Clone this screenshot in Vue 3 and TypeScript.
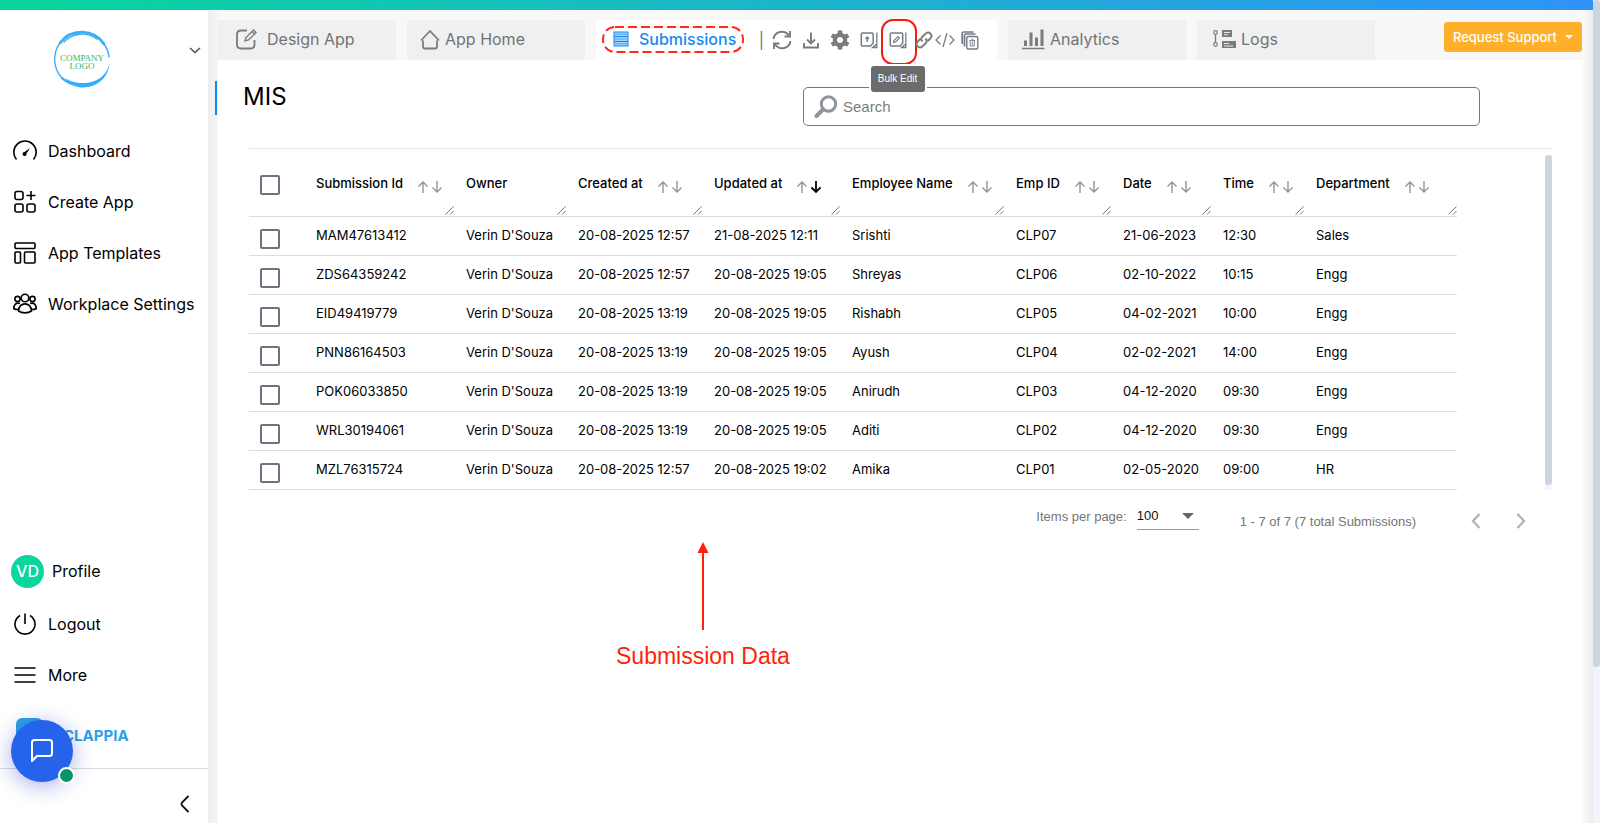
<script setup lang="ts">
import { ref } from 'vue'

interface Column {
  key: string
  label: string
  width: number
  sortable: boolean
}

const columns: Column[] = [
  { key: 'id', label: 'Submission Id', width: 150, sortable: true },
  { key: 'owner', label: 'Owner', width: 112, sortable: false },
  { key: 'created', label: 'Created at', width: 136, sortable: true },
  { key: 'updated', label: 'Updated at', width: 138, sortable: true },
  { key: 'name', label: 'Employee Name', width: 164, sortable: true },
  { key: 'emp', label: 'Emp ID', width: 107, sortable: true },
  { key: 'date', label: 'Date', width: 100, sortable: true },
  { key: 'time', label: 'Time', width: 93, sortable: true },
  { key: 'dept', label: 'Department', width: 153, sortable: true },
]

const owner = "Verin D'Souza"
const rows: Record<string, string>[] = [
  { id: 'MAM47613412', owner, created: '20-08-2025 12:57', updated: '21-08-2025 12:11', name: 'Srishti', emp: 'CLP07', date: '21-06-2023', time: '12:30', dept: 'Sales' },
  { id: 'ZDS64359242', owner, created: '20-08-2025 12:57', updated: '20-08-2025 19:05', name: 'Shreyas', emp: 'CLP06', date: '02-10-2022', time: '10:15', dept: 'Engg' },
  { id: 'EID49419779', owner, created: '20-08-2025 13:19', updated: '20-08-2025 19:05', name: 'Rishabh', emp: 'CLP05', date: '04-02-2021', time: '10:00', dept: 'Engg' },
  { id: 'PNN86164503', owner, created: '20-08-2025 13:19', updated: '20-08-2025 19:05', name: 'Ayush', emp: 'CLP04', date: '02-02-2021', time: '14:00', dept: 'Engg' },
  { id: 'POK06033850', owner, created: '20-08-2025 13:19', updated: '20-08-2025 19:05', name: 'Anirudh', emp: 'CLP03', date: '04-12-2020', time: '09:30', dept: 'Engg' },
  { id: 'WRL30194061', owner, created: '20-08-2025 13:19', updated: '20-08-2025 19:05', name: 'Aditi', emp: 'CLP02', date: '04-12-2020', time: '09:30', dept: 'Engg' },
  { id: 'MZL76315724', owner, created: '20-08-2025 12:57', updated: '20-08-2025 19:02', name: 'Amika', emp: 'CLP01', date: '02-05-2020', time: '09:00', dept: 'HR' },
]

const selected = ref<string[]>([])
const search = ref('')
const pageSize = ref('100')
const sortKey = ref('updated')

function toggleAll(event: Event) {
  const on = (event.target as HTMLInputElement).checked
  selected.value = on ? rows.map((r) => r.id) : []
}
</script>

<template>
  <div class="page">
    <div class="view">
      <div class="topbar"></div>
      <div class="body">
        <aside class="sidebar">
          <div class="workspace">
            <svg class="company" viewBox="0 0 60 60" role="img" aria-label="Company logo">
              <g fill="none" stroke="#35adfb" stroke-linecap="round">
                <path d="M8 14 A27 27 0 0 1 52 15" stroke-width="2.6" />
                <path d="M12 13 A25 25 0 0 1 45 10" stroke-width="1.4" />
                <path d="M52 15 A27 27 0 0 1 57 28" stroke-width="1.4" />
                <path d="M8 14 A27.500 27.500 0 0 0 10 49" stroke-width="1.3" />
                <path d="M10 49 A27 27 0 0 0 24 56" stroke-width="2.4" />
              </g>
              <path d="M57.500 33 C56 46 45 54 31 54 C24 54 17 52 13 49 C18 56 25 58.500 31 58.500 C46 58 57 48 57.500 33Z" fill="#35adfb" />
              <text x="30" y="32" text-anchor="middle">COMPANY</text>
              <text x="30" y="40" text-anchor="middle">LOGO</text>
            </svg>
            <button class="plain" aria-label="Switch workplace">
              <svg width="12" height="7" viewBox="0 0 12 7"><path d="M1 1 L6 5.500 L11 1" fill="none" stroke="#4b5563" stroke-width="1.6" /></svg>
            </button>
          </div>

          <nav class="menu">
            <a href="#">
              <svg viewBox="0 0 24 24">
                <path d="M3.500 20.500 A11.200 11.200 0 1 1 20.500 20.500" />
                <path d="M17 9 L13.500 14.500 A2 2 0 1 1 11.500 13Z" fill="currentColor" stroke="none" />
              </svg>
              Dashboard
            </a>
            <a href="#">
              <svg viewBox="0 0 24 24">
                <rect x="2" y="1.500" width="8" height="8" rx="2" />
                <rect x="2" y="14" width="8" height="8" rx="2" />
                <rect x="14" y="14" width="8" height="8" rx="2" />
                <path d="M18 1 V10 M13.500 5.500 H22.500" />
              </svg>
              Create App
            </a>
            <a href="#">
              <svg viewBox="0 0 24 24">
                <rect x="2" y="2" width="20" height="5.500" rx="1" />
                <rect x="2" y="11" width="5.500" height="11" rx="1" />
                <rect x="11.500" y="11" width="10.500" height="11" rx="1" />
              </svg>
              App Templates
            </a>
            <a href="#">
              <svg viewBox="0 0 24 24">
                <circle cx="12" cy="6" r="3.800" />
                <circle cx="4.500" cy="7" r="2.600" />
                <circle cx="19.500" cy="7" r="2.600" />
                <path d="M5.500 19 C5.500 9.500 18.500 9.500 18.500 19 C15 21.500 9 21.500 5.500 19Z" />
                <path d="M7 11.500 C3 10 .8 13 .8 16.500 Q2.500 17.700 5.500 17.500 M17 11.500 C21 10 23.200 13 23.200 16.500 Q21.500 17.700 18.500 17.500" />
              </svg>
              Workplace Settings
            </a>
          </nav>

          <nav class="menu account">
            <a href="#" class="profile"><span class="avatar">VD</span>Profile</a>
            <a href="#">
              <svg viewBox="0 0 24 24"><path d="M12 1.500 V12 M7 3.500 A10 10 0 1 0 17 3.500" /></svg>
              Logout
            </a>
            <a href="#">
              <svg viewBox="0 0 24 24"><path d="M1.500 5 H22.500 M1.500 12 H22.500 M1.500 19 H22.500" /></svg>
              More
            </a>
          </nav>
          <div class="brand">
            <span class="brand-mark"></span>
            <span>CLAPPIA</span>
            <button class="chat" aria-label="Open chat">
              <svg width="24" height="26" viewBox="0 0 24 26">
                <path d="M2 23 V4.500 Q2 2 4.500 2 H19.500 Q22 2 22 4.500 V15.500 Q22 18 19.500 18 H7Z" fill="none" stroke="#fff" stroke-width="2" stroke-linejoin="round" />
              </svg>
              <span class="online"></span>
            </button>
          </div>
          <div class="collapse">
            <button class="plain" aria-label="Collapse menu">
              <svg width="10" height="18" viewBox="0 0 10 18"><path d="M8.500 1 L2 7.500 Q1 9 2 10.500 L8.500 17" fill="none" stroke="#111" stroke-width="1.8" /></svg>
            </button>
          </div>
        </aside>

        <div class="gutter"><span class="marker"></span></div>

        <main class="content">
          <header class="tabs">
            <a href="#" class="tab">
              <svg width="31" height="22" viewBox="0 0 31 22">
                <path d="M16 2.500 H10 Q6 2.500 6 6.500 V16.500 Q6 20.500 10 20.500 H19.500 Q23.500 20.500 23.500 16.500 V12" stroke-width="1.800" />
                <path d="M14 13 L15 9.500 L22.500 2 L25 4.500 L17.500 12Z M21 3.500 L23.500 6" stroke-width="1.400" />
              </svg>
              Design App
            </a>
            <a href="#" class="tab">
              <svg width="20" height="22" viewBox="0 0 20 22">
                <path d="M1 12.500 L10 3 L19 12.500 M3 12.500 V18.500 Q3 20.500 5 20.500 H15 Q17 20.500 17 18.500 V12.500" stroke-width="1.800" />
              </svg>
              App Home
            </a>
            <div class="tab active">
              <a href="#" class="pill">
                <svg class="dashes" aria-hidden="true"><rect x="1" y="1" width="140" height="25" rx="12" /></svg>
                <svg width="16" height="16" viewBox="0 0 16 16">
                  <rect x="1" y="1" width="14" height="14" fill="#a6d2fb" stroke="#1788ee" />
                  <path d="M1 5.500 H15 M1 10.500 H15" stroke="#1788ee" stroke-width="1.200" />
                  <path d="M2 3.200 H14 M2 8 H14 M2 12.800 H14" stroke="#1788ee" stroke-width="0.600" />
                </svg>
                Submissions
              </a>
              <span class="bar">|</span>
              <div class="tools">
                <button class="tool" aria-label="Refresh">
                  <svg width="20" height="20" viewBox="0 0 20 20"><path d="M1.500 9 C2.500 1.500 12 -1 17 5.500 M18 1 V6.500 H12.500 M18.500 11 C17.500 18.500 8 21 3 14.500 M2 19 V13.500 H7.500" stroke-width="1.900" /></svg>
                </button>
                <button class="tool" aria-label="Download">
                  <svg width="18" height="18" viewBox="0 0 18 18"><path d="M9 1.500 V12 M5 8.500 L9 12.500 L13 8.500 M2 12 V16.500 H16 V12" stroke-width="1.900" /></svg>
                </button>
                <button class="tool" aria-label="Settings">
                  <svg width="20" height="20" viewBox="0 0 20 20">
                    <circle cx="10" cy="10" r="5" stroke-width="4.500" />
                    <path d="M10 0.500 V5 M10 15 V19.500 M1.800 5.200 L5.500 7.500 M18.200 5.200 L14.500 7.500 M1.800 14.800 L5.500 12.500 M18.200 14.800 L14.500 12.500" stroke-width="4.400" />
                    <circle cx="10" cy="10" r="2.800" fill="#fff" stroke="none" />
                  </svg>
                </button>
                <button class="tool slate" aria-label="Bulk Upload">
                  <svg width="18" height="18" viewBox="0 0 18 18">
                    <path d="M2.500 2 H12 Q13.200 2 13.200 3.200 V12 L10.500 15 H2.500 Q1.300 15 1.300 13.800 V3.200 Q1.300 2 2.500 2Z" stroke-width="1.500" />
                    <path d="M16.800 1.500 V16.500 H12.500 L16 13.500" stroke-width="1.300" />
                    <path d="M7.200 11 V6.500 M5.500 8 L7.200 6 L9 8" stroke-width="1.300" />
                  </svg>
                </button>
                <button class="tool slate ringed" aria-label="Bulk Edit" aria-describedby="bulk-edit-tip">
                  <svg width="18" height="18" viewBox="0 0 18 18">
                    <path d="M2.500 2 H12.500 Q13.700 2 13.700 3.200 V12 L11 15 H2.500 Q1.300 15 1.300 13.800 V3.200 Q1.300 2 2.500 2Z" stroke-width="1.500" />
                    <path d="M16.800 1.500 V16.500 H12.500 L16 13.500" stroke-width="1.300" />
                    <path d="M4.500 11.500 L5 9.500 L9 5.500 L10.500 7 L6.500 11Z" stroke-width="1.100" />
                  </svg>
                  <span id="bulk-edit-tip" class="tip" role="tooltip">Bulk Edit</span>
                </button>
                <button class="tool link" aria-label="Copy link">
                  <svg width="18" height="18" viewBox="0 0 18 18"><path d="M7.500 10.500 C5.500 8.500 6 7 7.500 5.500 L10.500 2.700 C14 -.5 18.500 4 15.300 7.500 L12.800 10 M10.500 7.500 C12.500 9.500 12 11 10.500 12.500 L7.500 15.300 C4 18.500 -.5 14 2.700 10.500 L5.200 8" stroke-width="1.900" /></svg>
                </button>
                <button class="tool code" aria-label="Embed code">
                  <svg width="20" height="18" viewBox="0 0 20 18"><path d="M5.500 4.500 L1 9 L5.500 13.500 M14.500 4.500 L19 9 L14.500 13.500 M12 2 L8 16" stroke-width="1.300" /></svg>
                </button>
                <button class="tool slate" aria-label="Bulk Delete">
                  <svg width="18" height="19" viewBox="0 0 18 19">
                    <path d="M1.200 13 V2.500 Q1.200 1 2.700 1 H12.500 M3.500 15.500 V4.500 Q3.500 3 5 3 H14.500" stroke-width="1.700" />
                    <rect x="5.800" y="5.500" width="11" height="12.500" rx="1.500" stroke-width="1.400" />
                    <path d="M8.500 9.500 H14 M9.200 9.500 V15 H13.300 V9.500 M11.300 10.500 V14 M10.300 8.300 H12.300" stroke-width="0.900" />
                  </svg>
                </button>
              </div>
            </div>
            <a href="#" class="tab">
              <svg width="24" height="22" viewBox="0 0 24 22"><path d="M1 20.500 H23.500" stroke-width="1.500" /><path d="M4.500 12.500 V18 M10 4.500 V18 M15.500 9.500 V18 M21 1.500 V18" stroke-width="3" /></svg>
              Analytics
            </a>
            <a href="#" class="tab">
              <svg width="26" height="20" viewBox="0 0 26 20">
                <circle cx="5.500" cy="3.500" r="1.800" stroke-width="1.200" /><circle cx="5.500" cy="15.500" r="1.800" stroke-width="1.200" />
                <path d="M5.500 5.500 V13.500" stroke-width="1.400" />
                <path d="M12 1 H22 V8 H12Z M12 12 H26 V19 H12Z" fill="#7b7b7b" stroke="none" />
                <path d="M14 3.500 H20 M14 5.800 H18 M14 14.500 H19 M14 17 H23" stroke="#e8e8ea" stroke-width="1.100" />
              </svg>
              Logs
            </a>
            <button class="support">Request Support <span class="caret"></span></button>
          </header>

          <section class="panel">
            <div class="heading">
              <h1>MIS</h1>
              <label class="search">
                <svg width="24" height="24" viewBox="0 0 24 24"><circle cx="14.500" cy="9" r="7.200" fill="none" stroke="#8f959b" stroke-width="3" /><path d="M9 14.500 L2.500 21" stroke="#8f959b" stroke-width="4" stroke-linecap="round" /></svg>
                <input v-model="search" type="text" placeholder="Search" aria-label="Search" />
              </label>
            </div>

            <div class="grid">
              <div class="scroller">
                <table>
                  <colgroup>
                    <col class="check-col" />
                    <col v-for="c in columns" :key="c.key" :style="{ width: c.width + 'px' }" />
                  </colgroup>
                  <thead>
                    <tr>
                      <th class="check"><input type="checkbox" aria-label="Select all rows" @change="toggleAll" /></th>
                      <th v-for="c in columns" :key="c.key" scope="col">
                        <div class="head">
                          <span>{{ c.label }}</span>
                          <button v-if="c.sortable" class="sort" :class="{ sorted: sortKey === c.key }" :aria-label="'Sort by ' + c.label" @click="sortKey = c.key">
                            <svg width="24" height="12" viewBox="0 0 24 12">
                              <path d="M5 12 V1 M0.500 5.500 L5 1 L9.500 5.500" />
                              <path class="down" d="M19 0 V11 M14.500 6.500 L19 11 L23.500 6.500" />
                            </svg>
                          </button>
                        </div>
                        <svg class="grip" width="9" height="9" viewBox="0 0 9 9"><path d="M0.500 8.500 L8.500 0.500 M5 8.500 L8.500 5" stroke="#777" fill="none" /></svg>
                      </th>
                    </tr>
                  </thead>
                  <tbody>
                    <tr v-for="r in rows" :key="r.id">
                      <td class="check"><input v-model="selected" type="checkbox" :value="r.id" :aria-label="'Select ' + r.id" /></td>
                      <td v-for="c in columns" :key="c.key">{{ r[c.key] }}</td>
                    </tr>
                  </tbody>
                </table>
              </div>
              <div class="rail"><span></span></div>
            </div>

            <div class="pager">
              <div class="size">
                <label for="page-size">Items per page:</label>
                <div class="select">
                  <select id="page-size" v-model="pageSize">
                    <option>100</option>
                    <option>50</option>
                    <option>25</option>
                  </select>
                </div>
              </div>
              <span class="status">1 - 7 of 7 (7 total Submissions)</span>
              <button class="step" aria-label="Previous page"><svg width="10" height="16" viewBox="0 0 10 16"><path d="M8.500 1 L2 8 L8.500 15" /></svg></button>
              <button class="step" aria-label="Next page"><svg width="10" height="16" viewBox="0 0 10 16"><path d="M1.500 1 L8 8 L1.500 15" /></svg></button>
            </div>

            <figure class="callout">
              <svg width="12" height="88" viewBox="0 0 12 88"><path d="M6 8 V88" stroke="#ff1f0a" stroke-width="2" /><path d="M6 0 L11.500 11 H0.500Z" fill="#ff1f0a" /></svg>
              <figcaption>Submission Data</figcaption>
            </figure>
          </section>
        </main>
        <div class="edge"></div>
      </div>
    </div>
    <div class="page-rail"><span></span></div>
  </div>
</template>

<style>
body {
  margin: 0;
  background: #fff;
}
</style>

<style scoped>
* {
  box-sizing: border-box;
}
.page {
  display: flex;
  height: 100vh;
  font-family: Inter, "Liberation Sans", sans-serif;
  font-size: 16px;
  color: #000;
}
a {
  color: inherit;
  text-decoration: none;
}
button {
  font-family: inherit;
  border: 0;
  padding: 0;
  background: none;
  cursor: pointer;
}
.view {
  flex: 1;
  min-width: 0;
  display: flex;
  flex-direction: column;
}
.topbar {
  height: 10px;
  background: linear-gradient(90deg, #08d69c, #2f93f8);
}
.body {
  flex: 1;
  min-height: 0;
  display: flex;
}
.page-rail {
  width: 7px;
  background: #f1f5f9;
}
.page-rail span {
  display: block;
  height: 81%;
  border-radius: 4px;
  background: #cbd5e1;
}

/* sidebar */
.sidebar {
  width: 208px;
  flex: none;
  display: flex;
  flex-direction: column;
}
.workspace {
  height: 115px;
  padding: 19px 7px 0 52px;
  display: flex;
  justify-content: space-between;
  align-items: flex-start;
}
.company {
  width: 60px;
  height: 60px;
}
.company text {
  font: 9px "Liberation Serif", serif;
  fill: #2fb765;
}
.plain {
  display: flex;
}
.workspace .plain {
  margin-top: 18px;
}
.menu {
  display: flex;
  flex-direction: column;
}
.menu a {
  height: 51px;
  padding-left: 13px;
  display: flex;
  align-items: center;
  gap: 11px;
}
.menu svg {
  width: 24px;
  height: 24px;
  fill: none;
  stroke: currentColor;
  stroke-width: 1.6;
}
.menu.account {
  margin-top: auto;
  padding-bottom: 2px;
}
.menu .profile {
  height: 54px;
  padding-left: 11px;
  gap: 8px;
}
.avatar {
  width: 33px;
  height: 33px;
  border-radius: 50%;
  background: #08d69c;
  color: #fff;
  font-weight: 500;
  line-height: 33px;
  text-align: center;
}
.brand {
  position: relative;
  height: 66px;
  padding-left: 16px;
  display: flex;
  align-items: center;
  gap: 20px;
  color: #2aa1e3;
  font-size: 15px;
  font-weight: 700;
}
.brand-mark {
  width: 27px;
  height: 34px;
  border-radius: 6px;
  background: #2aa1e3;
}
.chat {
  position: absolute;
  left: 11px;
  top: 18px;
  width: 62px;
  height: 62px;
  border-radius: 50%;
  background: #2563eb;
  box-shadow: 0 4px 22px rgba(37, 60, 200, 0.4);
  display: flex;
  align-items: center;
  justify-content: center;
}
.online {
  position: absolute;
  right: -2px;
  bottom: -2px;
  width: 17px;
  height: 17px;
  border: 2px solid #fff;
  border-radius: 50%;
  background: #07946a;
}
.collapse {
  height: 55px;
  padding: 15px 18px 0 0;
  border-top: 1px solid #d9dde0;
  display: flex;
  justify-content: flex-end;
  align-items: center;
}

/* gutters */
.gutter {
  width: 10px;
  flex: none;
  padding: 71px 0 0 7px;
  background: linear-gradient(90deg, #eee, #f5f5f5);
}
.marker {
  display: block;
  width: 2px;
  height: 34px;
  background: #088cf4;
}
.edge {
  width: 10px;
  flex: none;
  background: linear-gradient(90deg, #fafafa, #ececec);
}

/* tabs */
.content {
  flex: 1;
  min-width: 0;
  display: flex;
  flex-direction: column;
}
.tabs {
  height: 50px;
  padding-top: 10px;
  display: flex;
  gap: 11px;
  background: #f8f8f8;
  color: #737373;
}
.tab {
  width: 178px;
  height: 40px;
  padding: 0 0 2px 13px;
  display: flex;
  align-items: center;
  gap: 5px;
  background: #eff0f2;
}
.tab svg {
  fill: none;
  stroke: #7b7b7b;
}
.tab.active {
  width: 401px;
  padding: 0 10px 0 6px;
  gap: 0;
  background: #fff;
}
.pill {
  position: relative;
  width: 142px;
  height: 28px;
  padding: 0 0 2px 11px;
  display: flex;
  align-items: center;
  gap: 10px;
  color: #1788ee;
  font-weight: 500;
}
.pill .dashes {
  position: absolute;
  left: 0;
  top: 0;
  width: 142px;
  height: 27px;
  stroke: #ff2a1a;
  stroke-width: 2;
  stroke-dasharray: 9 4;
}
.bar {
  width: 23px;
  padding-left: 12px;
  text-align: center;
}
.tools {
  display: flex;
}
.tool {
  position: relative;
  width: 29px;
  height: 40px;
  display: flex;
  align-items: center;
  justify-content: center;
}
.tool.slate svg {
  stroke: #727b87;
}
.tool.link {
  width: 23px;
}
.tool.code {
  width: 20px;
}
.ringed::before {
  content: "";
  position: absolute;
  left: -2px;
  top: -1px;
  width: 32px;
  height: 42px;
  border: 2px solid #f81c0c;
  border-radius: 12px;
}
.tip {
  position: absolute;
  z-index: 2;
  top: 46px;
  width: 54px;
  height: 26px;
  border-radius: 3px;
  background: #6b6b6b;
  box-shadow: 0 0 0 2px #fff;
  color: #fff;
  font: 10px/26px "Liberation Sans", Arial, sans-serif;
  text-align: center;
}
.support {
  width: 138px;
  height: 30px;
  margin: 2px 1px 0 auto;
  border-radius: 3px;
  background: #ffb02a;
  color: #fff;
  font-size: 13px;
  font-weight: 500;
  display: flex;
  align-items: center;
  justify-content: center;
  gap: 8px;
}
.caret {
  border: 4px solid transparent;
  border-top-color: #fff;
  border-bottom: 0;
}

/* panel */
.panel {
  flex: 1;
  padding: 27px 31px 0;
}
.heading {
  display: flex;
  justify-content: space-between;
  align-items: flex-start;
  padding-right: 72px;
}
h1 {
  margin: 0 0 0 -6px;
  padding-top: 2px;
  font-size: 24px;
  line-height: 16px;
  font-weight: 400;
}
.search {
  width: 55%;
  height: 39px;
  padding: 0 10px;
  display: flex;
  align-items: center;
  gap: 5px;
  border: 1px solid #70777e;
  border-radius: 5px;
}
.search input {
  flex: 1;
  border: 0;
  outline: 0;
  background: none;
  padding: 0;
  font: 15px "Liberation Sans", Arial, sans-serif;
}
.search input::placeholder {
  color: #7d7d7d;
}
.grid {
  margin-top: 22px;
  border-top: 1px solid #e6e6e6;
  display: flex;
  justify-content: space-between;
}
.scroller {
  overflow-x: auto;
}
table {
  width: 1208px;
  table-layout: fixed;
  border-collapse: separate;
  border-spacing: 0;
  font-size: 13px;
}
.check-col {
  width: 55px;
}
th,
td {
  position: relative;
  height: 39px;
  padding: 0 0 2px 12px;
  border-bottom: 1px solid #dedede;
  text-align: left;
  white-space: nowrap;
  font-weight: 400;
}
th {
  height: 68px;
  padding-bottom: 0;
  font-weight: 500;
}
th.check,
td.check {
  padding: 5px 0 0 11px;
}
.check input {
  appearance: none;
  display: block;
  width: 20px;
  height: 20px;
  margin: 0;
  border: 2px solid #6c757f;
  border-radius: 2px;
}
.check input:checked {
  background: #1788ee;
}
.head {
  display: flex;
  align-items: center;
  gap: 15px;
}
.sort {
  padding-top: 8px;
  display: flex;
}
.sort svg {
  fill: none;
  stroke: #949494;
  stroke-width: 1.4;
}
.sorted .down {
  stroke: #000;
  stroke-width: 1.8;
}
.grip {
  position: absolute;
  right: 0;
  bottom: 1px;
}
.rail {
  width: 7px;
  margin-top: 6px;
  padding-bottom: 5px;
  background: #f1f5f9;
}
.rail span {
  display: block;
  height: 100%;
  border-radius: 4px;
  background: #cbd5e1;
}

/* pagination */
.pager {
  height: 62px;
  padding-right: 11px;
  display: flex;
  align-items: center;
  justify-content: flex-end;
  color: #757575;
  font: 13px "Liberation Sans", Arial, sans-serif;
}
.size {
  display: flex;
  align-items: center;
  gap: 10px;
  margin-right: 41px;
  padding-bottom: 10px;
}
.select {
  position: relative;
  width: 62px;
  border-bottom: 1px solid #999;
}
.select::after {
  content: "";
  position: absolute;
  right: 5px;
  top: 10px;
  border: 6px solid transparent;
  border-top-color: #666;
  border-bottom: 0;
  pointer-events: none;
}
select {
  appearance: none;
  width: 100%;
  height: 26px;
  padding: 0;
  border: 0;
  background: none;
  color: #111;
  font: inherit;
}
.status {
  margin-right: 40px;
}
.step {
  width: 40px;
  height: 40px;
  margin-left: 5px;
  display: flex;
  align-items: center;
  justify-content: center;
}
.status + .step {
  margin-left: 0;
}
.step svg {
  fill: none;
  stroke: #b5b5b5;
  stroke-width: 2.4;
}

/* callout */
.callout {
  width: max-content;
  margin: -10px 0 0 367px;
  display: flex;
  flex-direction: column;
  align-items: center;
  gap: 13px;
  color: #ff1f0a;
  font: 23px/26px "Liberation Sans", Arial, sans-serif;
}
</style>
